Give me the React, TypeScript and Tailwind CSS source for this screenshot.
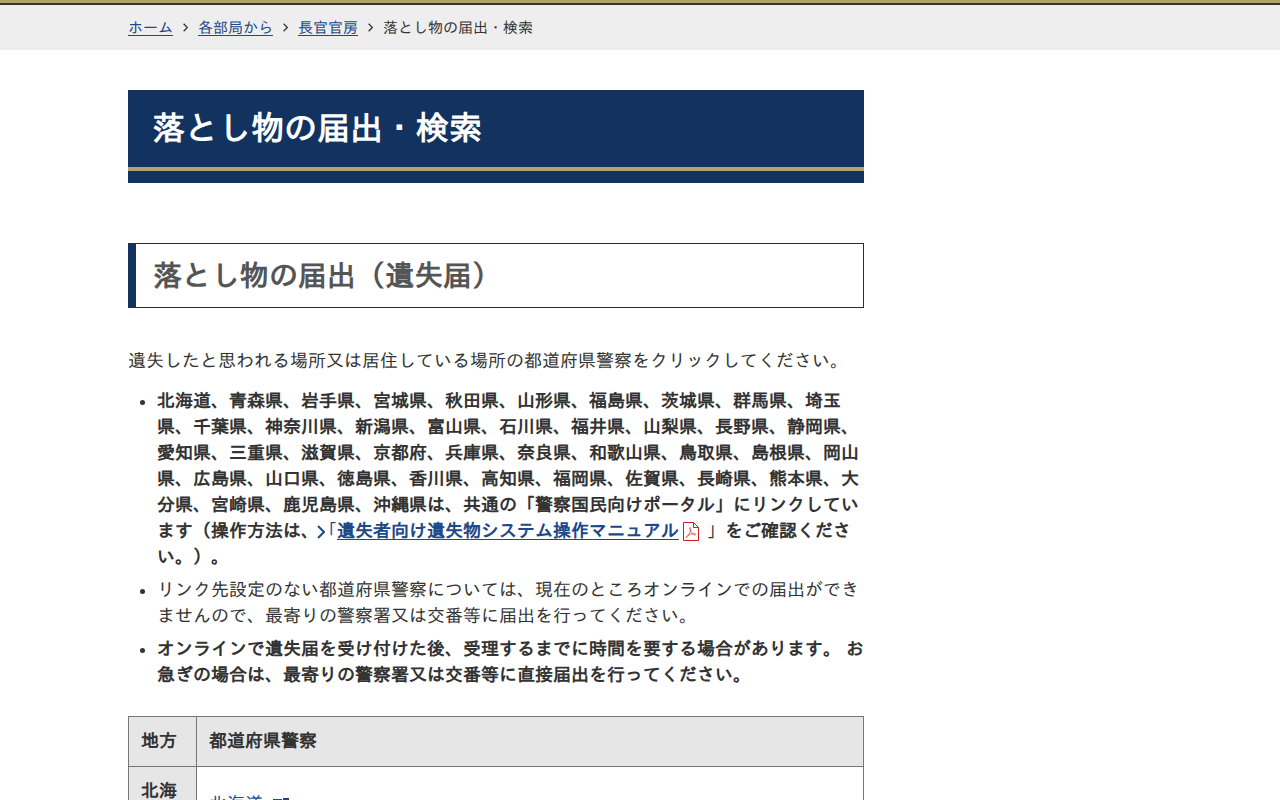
import type { ReactNode } from "react";

const crumbs = ["ホーム", "各部局から", "長官官房"];

function Chevron({ className }: { className: string }) {
  return (
    <svg viewBox="0 0 8 14" fill="none" stroke="currentColor" strokeWidth="2" aria-hidden="true" className={className}>
      <path d="M1 1l6 6-6 6" />
    </svg>
  );
}

function PdfIcon() {
  return (
    <svg viewBox="0 0 16 19" fill="none" stroke="#c81e1e" aria-hidden="true" className="mr-2 ml-1 inline-block h-[19px] w-4 align-[-4px]">
      <path d="M.5.5h10l5 5v13H.5z" />
      <path d="M10.5.5v5h5" />
      <path
        strokeWidth=".6"
        d="M7.200 5.500c-.8 0-.6 1.600 0 3 .9 2.200 2.600 4 4.300 4.400 1.600.3 2-.9.500-1.200-2.200-.4-5.300.4-7.500 1.700-1.800 1.100-1.800 2.400-.9 2.100 1.400-.5 3.400-4.600 4-7.400.3-1.600.2-2.600-.4-2.600z"
      />
    </svg>
  );
}

function ExternalIcon() {
  return (
    <svg viewBox="0 0 16 14" fill="none" stroke="currentColor" strokeWidth="2" aria-hidden="true" className="ml-[10px] inline-block h-[14px] w-4 align-[-2px]">
      <path d="M9 2H1v11h12V8" />
      <path d="M10 1h5v5M15 1L7 8" />
    </svg>
  );
}

function Item({ bold, children }: { bold?: boolean; children: ReactNode }) {
  return <li className={bold ? "font-bold" : ""}>{children}</li>;
}

export default function App() {
  return (
    <div
      lang="ja"
      className="bg-white font-['Liberation_Sans','IPAGothic','Noto_Sans_CJK_JP',sans-serif] text-lg leading-[26px] text-[#333]"
    >
      <div className="h-[5px] border-b-2 border-[#333] bg-[#b2a26c]" />
      <nav aria-label="パンくずリスト" className="bg-[#eee] py-3">
        <ol className="mx-auto flex w-4/5 text-[15px] leading-[21px]">
          {crumbs.map((label) => (
            <li key={label} className="flex items-center">
              <a href="#" className="text-[#1d4889] underline underline-offset-2">
                {label}
              </a>
              <Chevron className="mx-[10px] h-[9px] w-[5px]" />
            </li>
          ))}
          <li>落とし物の届出・検索</li>
        </ol>
      </nav>
      <div className="mx-auto w-4/5 pt-10">
        <main className="max-w-[736px]">
          <h1 className="border-b-12 border-[#12325f] bg-[#12325f] text-[33px] leading-[45px] font-bold text-white">
            <span className="block border-b-4 border-[#b2a26c] px-6 py-4">落とし物の届出・検索</span>
          </h1>
          <section>
            <h2 className="mt-15 border border-l-8 border-[#12325f] px-[17px] pt-[13px] pb-[11px] text-[29px] leading-[39px] font-bold text-[#555]">
              落とし物の届出（遺失届）
            </h2>
            <p className="mt-10">遺失したと思われる場所又は居住している場所の都道府県警察をクリックしてください。</p>
            <ul className="mt-[14px] flex list-disc flex-col gap-[7px] pl-[29px]">
              <Item bold>
                北海道、青森県、岩手県、宮城県、秋田県、山形県、福島県、茨城県、群馬県、埼玉県、千葉県、神奈川県、新潟県、富山県、石川県、福井県、山梨県、長野県、静岡県、愛知県、三重県、滋賀県、京都府、兵庫県、奈良県、和歌山県、鳥取県、島根県、岡山県、広島県、山口県、徳島県、香川県、高知県、福岡県、佐賀県、長崎県、熊本県、大分県、宮崎県、鹿児島県、沖縄県は、共通の「警察国民向けポータル」にリンクしています（操作方法は、
                <span className="relative font-normal text-[#1d4889]">
                  <Chevron className="absolute top-1 -left-0.5 h-[14px] w-2" />「
                </span>
                <a href="#" className="text-[#1d4889] underline underline-offset-2">
                  遺失者向け遺失物システム操作マニュアル
                </a>
                <PdfIcon />
                <span className="font-normal">」</span>をご確認ください。）。
              </Item>
              <Item>
                リンク先設定のない都道府県警察については、現在のところオンラインでの届出ができませんので、最寄りの警察署又は交番等に届出を行ってください。
              </Item>
              <Item bold>
                オンラインで遺失届を受け付けた後、受理するまでに時間を要する場合があります。 お急ぎの場合は、最寄りの警察署又は交番等に直接届出を行ってください。
              </Item>
            </ul>
            <table className="mt-7 w-full table-fixed border-collapse text-left leading-[25px]">
              <thead>
                <tr className="bg-[#e6e6e6]">
                  <th scope="col" className="w-17 border border-[#767676] p-3">
                    地方
                  </th>
                  <th scope="col" className="border border-[#767676] p-3">
                    都道府県警察
                  </th>
                </tr>
              </thead>
              <tbody>
                <tr>
                  <th scope="row" className="border border-[#767676] bg-[#e6e6e6] p-3">
                    北海道
                  </th>
                  <td className="border border-[#767676] p-3">
                    <a href="#" className="text-[#1d4889] underline underline-offset-2">
                      北海道
                    </a>
                    <span className="text-[#1d4889]">
                      <ExternalIcon />
                    </span>
                  </td>
                </tr>
              </tbody>
            </table>
          </section>
        </main>
      </div>
    </div>
  );
}
